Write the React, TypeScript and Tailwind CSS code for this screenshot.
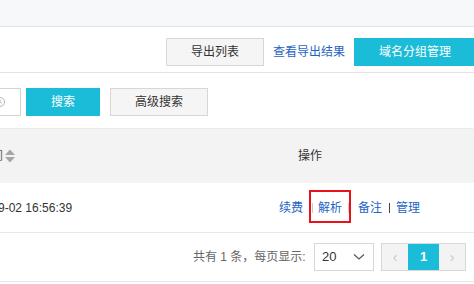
import React from "react";

const font = { fontFamily: '"Liberation Sans", "Noto Sans CJK SC", Arial, sans-serif' };

export default function App() {
  return (
    <div className="w-[474px] h-[284px] overflow-hidden bg-white text-[12px] text-[#333]" style={font}>
      {/* top strip */}
      <div className="h-[27px] bg-[#f7f8fa] border-b border-[#e2e3e5]" />

      {/* toolbar */}
      <div className="flex items-center pl-[166px] pt-[11px] pb-[6px] border-b border-[#e3e3e3] whitespace-nowrap">
        <button className="w-[98px] h-[28px] shrink-0 bg-[#f5f5f5] border border-[#d7d7d7] text-[#333] text-[12px] flex items-center justify-center">
          导出列表
        </button>
        <span className="ml-[9px] text-[#1f64c4] text-[12px] leading-[28px]">查看导出结果</span>
        <button className="ml-[9px] w-[122px] h-[28px] shrink-0 bg-[#1bbcd8] text-white text-[12px] flex items-center justify-center">
          域名分组管理
        </button>
      </div>

      {/* search row */}
      <div className="flex items-center pt-[15px] pb-[12px] border-b border-[#ebebeb] whitespace-nowrap">
        <div className="ml-[-40px] w-[61px] h-[28px] shrink-0 border border-[#d4d4d4] bg-white flex items-center">
          <svg width="12" height="12" viewBox="0 0 12 12" className="ml-[33px]">
            <circle cx="6" cy="6" r="4.5" fill="none" stroke="#b5b5b5" strokeWidth="1" />
            <path d="M6 3.5 V6 L7.8 7.2" fill="none" stroke="#b5b5b5" strokeWidth="1" />
          </svg>
        </div>
        <button className="ml-[5px] w-[74px] h-[28px] shrink-0 bg-[#1bbcd8] text-white text-[12px] flex items-center justify-center">
          搜索
        </button>
        <button className="ml-[10px] w-[98px] h-[28px] shrink-0 bg-[#f5f5f5] border border-[#d7d7d7] text-[#333] text-[12px] flex items-center justify-center">
          高级搜索
        </button>
      </div>

      {/* table header */}
      <div className="h-[54px] bg-[#f3f3f3] flex items-center whitespace-nowrap">
        <div className="w-[250px] shrink-0 flex items-center">
          <div className="w-[3px] overflow-hidden shrink-0">
            <span className="block ml-[-9px] text-[#666]">间</span>
          </div>
          <svg width="12" height="16" viewBox="0 0 12 16" className="ml-[1px]">
            <path d="M1 7 L6 1.5 L11 7 Z" fill="#a6a6a6" />
            <path d="M1 9 L6 14.5 L11 9 Z" fill="#a6a6a6" />
          </svg>
        </div>
        <div className="w-[120px] shrink-0 text-center text-[#333]">操作</div>
      </div>

      {/* table row */}
      <div className="h-[50px] flex items-center border-b border-[#e8e8e8] whitespace-nowrap">
        <div className="w-[250px] shrink-0 flex">
          <span className="ml-[-2px] text-[#333]">9-02 16:56:39</span>
        </div>
        <div className="relative flex items-center pl-[29px] text-[#1f64c4]">
          <span>续费</span>
          <span className="ml-[9px] w-px h-[10px] bg-[#c9c9c9]" />
          <span className="ml-[5px]">解析</span>
          <span className="ml-[6px] w-px h-[10px] bg-[#c9c9c9]" />
          <span className="ml-[9px]">备注</span>
          <span className="ml-[7px] w-px h-[10px] bg-[#444]" />
          <span className="ml-[6px]">管理</span>
          <div className="absolute left-[59px] top-[-9px] w-[42px] h-[33px] border-2 border-[#e8121b]" />
        </div>
      </div>

      {/* pagination */}
      <div className="h-[49px] flex items-center pl-[193px] border-b border-[#e8e8e8] whitespace-nowrap">
        <span className="text-[#666]">共有 1 条，每页显示:</span>
        <div className="ml-auto w-[60px] h-[28px] border border-[#d7d7d7] flex items-center pl-[7px] text-[#333] text-[13px]">
          <span>20</span>
          <svg width="12" height="8" viewBox="0 0 12 8" className="ml-[17px]">
            <path d="M1 1.5 L6 6 L11 1.5" fill="none" stroke="#555" strokeWidth="1.2" />
          </svg>
        </div>
        <div className="ml-[7px] mr-[8px] h-[28px] flex border border-[#d7d7d7]">
          <div className="w-[26px] bg-[#f3f3f3] flex items-center justify-center text-[#c8c8c8] text-[14px]">‹</div>
          <div className="w-[31px] bg-[#1bbcd8] flex items-center justify-center text-white font-bold text-[13px]">1</div>
          <div className="w-[26px] bg-[#f3f3f3] flex items-center justify-center text-[#c8c8c8] text-[14px]">›</div>
        </div>
      </div>
    </div>
  );
}
